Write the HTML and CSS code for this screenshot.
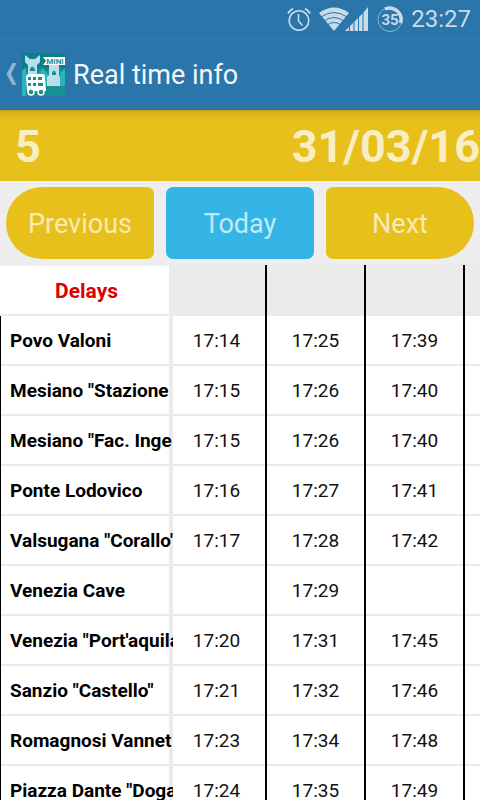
FILE: index.html
```html
<!DOCTYPE html>
<html lang="en">

<head>
    <meta charset="UTF-8">
    <meta name="viewport" content="width=device-width, initial-scale=1.0">
    <title>Real time info</title>
    <link rel="stylesheet" href="styles.css">
</head>

<body>
    <div class="status-bar">
        <svg class="icon-alarm" width="24" height="24" viewBox="0 0 24 24" fill="none" stroke="#c9dbe9">
            <circle cx="12" cy="13.500" r="9.800" stroke-width="1.600" />
            <path d="M11.500 7V14L15.500 18.500" stroke-width="1.600" />
            <path d="M1 6.500A13 13 0 0 1 6 1.500M18 1.500A13 13 0 0 1 23 6.500" stroke-width="2" />
        </svg>
        <svg class="icon-wifi" width="30" height="24" viewBox="0 0 30 24">
            <path d="M0 6Q15 -5 30 6L15 24Z" fill="#c9dbe9" />
            <path d="M2 10Q15 1 28 10M5 14Q15 7 25 14M8 18Q15 13 22 18" fill="none" stroke="#2a75a9" stroke-width="1" />
        </svg>
        <svg class="icon-signal" width="23" height="24" viewBox="0 0 23 24" fill="#c9dbe9">
            <path d="M0 24L4 20V24ZM5 19L8.500 15.500V24H5ZM9.500 14.500L13 11V24H9.500ZM14 10L17.500 6.500V24H14ZM18.500 5.500L23 0V24H18.500Z" />
        </svg>
        <svg class="icon-battery" width="26" height="26" viewBox="0 0 26 26">
            <circle cx="13" cy="13.500" r="12" fill="none" stroke="#8db4d1" stroke-width="1" />
            <path d="M8 3A11.500 11.500 0 0 1 23.500 17" fill="none" stroke="#c9dbe9" stroke-width="3.500" />
            <text class="battery-text" x="13" y="19" text-anchor="middle">35</text>
        </svg>
        <span class="clock">23:27</span>
    </div>

    <header class="action-bar">
        <a class="home" href="#" aria-label="Back">
            <svg width="11" height="22" viewBox="0 0 11 22" fill="#8eb4d0">
                <path d="M6.500 0H10.500L5 11L10.500 22H6.500L0.500 11Z" />
            </svg>
            <svg class="logo" width="43" height="43" viewBox="0 0 43 43">
                <path fill="#168f96" d="M0 0H43V43H0Z" />
                <path fill="#0d7f86" d="M0 0H43V17L39 14L34 18L29 14L24 18L19 14L14 18L8 13L0 20Z" />
                <path fill="#27b4bd" d="M0 18L4 14V43H0ZM17 20L21 15L26 21V33H24L22 22H17ZM38 20L43 15V33H38Z" />
                <path fill="#b9e0ea" d="M3 2L8 6H13L18 2V9L15 12V22H6V12L3 9Z" />
                <path fill="#b9e0ea" d="M27 11H37V23L38 24V33H25V24L27 22Z" />
                <path fill="#168f96" d="M8 18V16Q10 11 13 16V18ZM30 22V20Q32 15 34 20V22Z" />
                <path fill="#fff" d="M21 4H43V12H21L24 8Z" />
                <text class="logo-text" x="33" y="11" text-anchor="middle">MINI</text>
                <path fill="#fff" d="M4 24Q4 21 7 21H21Q23 21 23 24L24 38H5Z" />
                <path fill="#168f96" d="M6 24H9V27H6ZM11 24H14V27H11ZM16 24H20V27H16ZM6 30H9V33H6ZM11 30H14V33H11ZM16 30H21V33H16Z" />
                <circle cx="9" cy="39" r="3" fill="#168f96" stroke="#fff" stroke-width="1.500" />
                <circle cx="19" cy="39" r="3" fill="#168f96" stroke="#fff" stroke-width="1.500" />
            </svg>
        </a>
        <h1 class="title">Real time info</h1>
    </header>

    <div class="line-bar">
        <span>5</span>
        <span>31/03/16</span>
    </div>

    <nav class="day-nav">
        <button class="btn btn-prev">Previous</button>
        <button class="btn btn-today">Today</button>
        <button class="btn btn-next">Next</button>
    </nav>

    <main class="timetable-wrap">
        <table class="timetable">
            <colgroup>
                <col class="col-stop">
                <col class="col-first">
                <col class="col-time">
                <col class="col-time">
                <col class="col-time">
            </colgroup>
            <thead>
                <tr>
                    <th class="delays">Delays</th>
                    <td></td>
                    <td></td>
                    <td></td>
                    <td></td>
                </tr>
            </thead>
            <tbody>
                <tr>
                    <th>Povo Valoni</th>
                    <td>17:14</td>
                    <td>17:25</td>
                    <td>17:39</td>
                    <td></td>
                </tr>
                <tr>
                    <th>Mesiano "Stazione</th>
                    <td>17:15</td>
                    <td>17:26</td>
                    <td>17:40</td>
                    <td></td>
                </tr>
                <tr>
                    <th>Mesiano "Fac. Inge</th>
                    <td>17:15</td>
                    <td>17:26</td>
                    <td>17:40</td>
                    <td></td>
                </tr>
                <tr>
                    <th>Ponte Lodovico</th>
                    <td>17:16</td>
                    <td>17:27</td>
                    <td>17:41</td>
                    <td></td>
                </tr>
                <tr>
                    <th>Valsugana "Corallo"</th>
                    <td>17:17</td>
                    <td>17:28</td>
                    <td>17:42</td>
                    <td></td>
                </tr>
                <tr>
                    <th>Venezia Cave</th>
                    <td></td>
                    <td>17:29</td>
                    <td></td>
                    <td></td>
                </tr>
                <tr>
                    <th>Venezia "Port'aquila</th>
                    <td>17:20</td>
                    <td>17:31</td>
                    <td>17:45</td>
                    <td></td>
                </tr>
                <tr>
                    <th>Sanzio "Castello"</th>
                    <td>17:21</td>
                    <td>17:32</td>
                    <td>17:46</td>
                    <td></td>
                </tr>
                <tr>
                    <th>Romagnosi Vannet</th>
                    <td>17:23</td>
                    <td>17:34</td>
                    <td>17:48</td>
                    <td></td>
                </tr>
                <tr>
                    <th>Piazza Dante "Doga</th>
                    <td>17:24</td>
                    <td>17:35</td>
                    <td>17:49</td>
                    <td></td>
                </tr>
            </tbody>
        </table>
    </main>
</body>

</html>
```
FILE: styles.css
```css
* {
    box-sizing: border-box;
}

body {
    height: 100vh;
    margin: 0;
    display: flex;
    flex-direction: column;
    overflow: hidden;
    background: #eeeeee;
    font-family: Roboto, "Liberation Sans", sans-serif;
}

.status-bar {
    flex: none;
    height: 38px;
    padding: 0 9px;
    display: flex;
    align-items: center;
    justify-content: flex-end;
    background: #2a75a9;
    color: #c9dbe9;
}

.icon-alarm {
    margin-right: 8px;
}

.icon-wifi {
    margin-right: -4px;
}

.icon-signal {
    margin-right: 9px;
}

.icon-battery {
    margin-right: 8px;
}

.battery-text {
    font-size: 15px;
    font-weight: 700;
    fill: #c9dbe9;
}

.clock {
    font-size: 24px;
}

.action-bar {
    flex: none;
    height: 72px;
    padding-left: 6px;
    display: flex;
    align-items: center;
    gap: 8px;
    background: #2a75a9;
    border-top: 1px solid #327bad;
    border-bottom: 1px solid #286a97;
}

.home {
    display: flex;
    align-items: center;
    gap: 5px;
}

.logo-text {
    font-size: 8px;
    font-weight: 700;
    fill: #168f96;
}

.title {
    margin: 0;
    padding-top: 2px;
    font-size: 27px;
    font-weight: 400;
    color: #f3f5f7;
}

.line-bar {
    flex: none;
    height: 71px;
    padding: 2px 0 0 15px;
    display: flex;
    align-items: center;
    justify-content: space-between;
    background: linear-gradient(#c9a61b, #dcb71c 4px, #e7c01c 12px);
    color: #f9edc3;
    font-size: 45px;
    font-weight: 700;
}

.day-nav {
    flex: none;
    padding: 6px;
    display: grid;
    grid-template-columns: repeat(3, 1fr);
    gap: 12px;
}

.btn {
    height: 72px;
    padding: 2px 0 0;
    border: none;
    border-radius: 7px;
    background: #e7c01c;
    color: #f9eab5;
    font-family: inherit;
    font-size: 27px;
    cursor: pointer;
}

.btn-prev {
    border-radius: 36px 7px 7px 36px;
}

.btn-today {
    background: #34b5e6;
    color: #c2e9f8;
}

.btn-next {
    border-radius: 7px 36px 36px 7px;
}

.timetable-wrap {
    flex: 1;
    min-height: 0;
    overflow: hidden;
}

.timetable {
    table-layout: fixed;
    width: 564px;
    border-spacing: 0;
}

.col-stop {
    width: 173px;
}

.col-first {
    width: 94px;
}

.col-time {
    width: 99px;
}

/* row lines are shadows so that the column borders stay unbroken */
.timetable th,
.timetable td {
    height: 50px;
    padding: 0 0 2px;
    box-shadow: inset 0 -2px #ebebeb;
}

.timetable td {
    border-right: 2px solid #000;
    background: #fff;
    color: #111;
    font-size: 19px;
    text-align: center;
}

.timetable td:nth-child(2) {
    padding-right: 5px;
}

/* grey strip separates the stops from the times, long names run over it */
.timetable th {
    padding-left: 9px;
    border-left: 1px solid #000;
    background: linear-gradient(to left, #ebebeb 4px, #fff 4px);
    color: #000;
    font-size: 19px;
    text-align: left;
    white-space: nowrap;
    overflow: hidden;
}

.timetable thead th,
.timetable thead td {
    height: 51px;
}

.timetable thead td {
    background: #ebebeb;
}

.timetable .delays {
    padding: 2px 0;
    border-top: 1px solid #ebebeb;
    border-left: none;
    color: #dd0000;
    font-size: 21px;
    text-align: center;
}
```
